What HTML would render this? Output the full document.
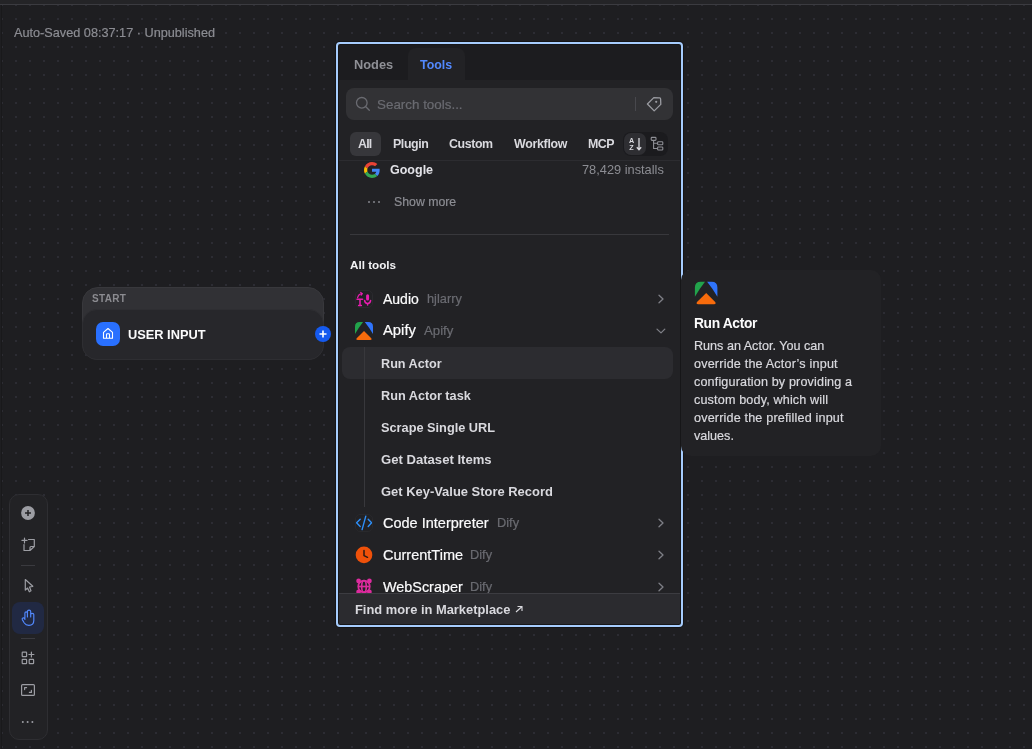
<!DOCTYPE html>
<html><head><meta charset="utf-8">
<style>
*{box-sizing:border-box;margin:0;padding:0}
html,body{width:1032px;height:749px;overflow:hidden;background:#1e1e21;font-family:"Liberation Sans", sans-serif;}
body{position:relative;background-color:#1e1e21;
background-image:radial-gradient(circle at 1px 1px,#2c2c33 0.9px,transparent 1.3px);
background-size:14px 14px;background-position:1px 4px;}
.a{position:absolute}
.t{position:absolute;white-space:nowrap;line-height:1;will-change:transform}
svg.a{overflow:visible}
</style></head>
<body>
<div class="a" style="left:0px;top:0px;width:1032px;height:4px;background:#242427;"></div>
<div class="a" style="left:0px;top:4px;width:1032px;height:1px;background:#3b3b40;"></div>
<div class="a" style="left:1px;top:5px;width:1px;height:744px;background:#19191b;"></div>
<div class="t" style="left:14px;top:26.700000000000003px;font-size:12.7px;font-weight:400;color:#8c8d93;;-webkit-text-stroke:0.2px #8c8d93">Auto-Saved 08:37:17 · Unpublished</div>
<div class="a" style="left:82px;top:287px;width:242px;height:73px;background:#313135;border-radius:16px;border:1px solid #38383c"></div>
<div class="a" style="left:82px;top:309px;width:242px;height:51px;background:#27272b;border-radius:15px;border:1px solid #2e2e32"></div>
<div class="t" style="left:92px;top:294.3px;font-size:10px;font-weight:700;color:#8b8b90;letter-spacing:0.3px">START</div>
<div class="a" style="left:96px;top:322px;width:24px;height:24px;background:#2970ff;border-radius:7px"></div>
<svg class="a" style="left:0;top:0" width="1032" height="749"><path d="M103.5,338.2 L103.5,332.3 L108,328.5 L112.5,332.3 L112.5,338.2 Z M106.5,338.2 L106.5,334.5 Q106.5,333.7 107.3,333.7 L108.7,333.7 Q109.5,333.7 109.5,334.5 L109.5,338.2" fill="none" stroke="#fff" stroke-width="1.1" stroke-linejoin="round"/></svg>
<div class="t" style="left:128.2px;top:328.8px;font-size:12.8px;font-weight:700;color:#fbfbfc;">USER INPUT</div>
<div class="a" style="left:315px;top:326px;width:16px;height:16px;background:#155aef;border-radius:8px"></div>
<svg class="a" style="left:0;top:0" width="1032" height="749"><path d="M319.5,334 H326.5 M323,330.5 V337.5" stroke="#fff" stroke-width="1.6"/></svg>
<div class="a" style="left:9px;top:494px;width:39px;height:246px;background:#222225;border-radius:10px;border:1px solid #2e2e32"></div>
<div class="a" style="left:12px;top:602px;width:32px;height:32px;background:#212943;border-radius:8px"></div>
<div class="a" style="left:21px;top:565px;width:14px;height:1px;background:#3a3a3f;"></div>
<div class="a" style="left:21px;top:638px;width:14px;height:1px;background:#3a3a3f;"></div>
<svg class="a" style="left:0;top:0" width="1032" height="749" fill="none" stroke="#9c9da3" stroke-width="1.2" stroke-linecap="round" stroke-linejoin="round">
<circle cx="28" cy="513" r="6.9" fill="#9c9da3" stroke="none"/>
<path d="M25,513 H31 M28,510 V516" stroke="#222225" stroke-width="1.5" stroke-linecap="butt"/>
<path d="M28.5,539.5 L34.3,539.5 L34.3,546.5 L30,550.5 L24,550.5 L24,544.5 M34.3,546.5 L31,546.5 Q30,546.5 30,547.5 L30,550.5 M22,540.4 L27,540.4 M24.5,538 L24.5,543"/>
<path d="M25.3,579.5 L32.8,586.3 L29.5,587 L31,590.8 L29.3,591.8 L27.6,588 L25.3,590 Z"/>
<path d="M24.9,618.2 V613.2 Q24.9,611.8 26.15,611.8 Q27.4,611.8 27.4,613.2 V617 M27.4,617 V611.4 Q27.4,610.1 29.05,610.1 Q30.7,610.1 30.7,611.4 V617 M30.7,617 V614.6 Q30.7,613.3 32.25,613.3 Q33.8,613.3 33.8,614.6 V620.5 Q33.8,625.3 28.9,625.3 Q25.8,625.3 24.3,623 L22.3,619.6 Q21.8,618.5 22.8,618 Q23.9,617.5 24.9,618.8 V619.5" stroke="#5289ff" stroke-width="1.15"/>
<rect x="22.2" y="652.2" width="4.4" height="4.4" rx="0.6"/>
<rect x="22.2" y="659.3" width="4.4" height="4.4" rx="0.6"/>
<rect x="29.2" y="659.3" width="4.4" height="4.4" rx="0.6"/>
<path d="M31.4,652 V657 M28.9,654.5 H33.9"/>
<rect x="21.6" y="684.6" width="12.8" height="10.8" rx="1"/>
<path d="M24.6,689.6 V687.6 H26.6 M31.4,690.4 V692.4 H29.4"/>
<circle cx="22.8" cy="722.1" r="1" fill="#9c9da3" stroke="none"/>
<circle cx="27.6" cy="722.1" r="1" fill="#9c9da3" stroke="none"/>
<circle cx="32.4" cy="722.1" r="1" fill="#9c9da3" stroke="none"/>
</svg>
<div class="a" style="left:336px;top:42px;width:347px;height:585px;border-radius:4px;box-shadow:0 0 0 1px #141416"></div>
<div class="a" style="left:338px;top:44px;width:343px;height:581px;background:#222225;"></div>
<div class="a" style="left:338px;top:44px;width:343px;height:36px;background:#1c1c1f;"></div>
<div class="a" style="left:408px;top:48px;width:57px;height:32px;background:#222225;border-radius:8px 8px 0 0"></div>
<div class="t" style="left:353.8px;top:58.5px;font-size:12.8px;font-weight:700;color:#8f9096;">Nodes</div>
<div class="t" style="left:420.3px;top:58.5px;font-size:12.4px;font-weight:700;color:#5289ff;">Tools</div>
<div class="a" style="left:346px;top:88px;width:327px;height:32px;background:#323235;border-radius:8px"></div>
<svg class="a" style="left:0;top:0" width="1032" height="749" fill="none" stroke="#6a6b71" stroke-width="1.3" stroke-linecap="round"><circle cx="361.8" cy="102.8" r="5.3"/><path d="M365.8,106.8 L369.3,110.3"/></svg>
<div class="t" style="left:377.3px;top:97.8px;font-size:13.4px;font-weight:400;color:#6a6b71;;-webkit-text-stroke:0.2px #6a6b71">Search tools...</div>
<div class="a" style="left:635px;top:97px;width:1px;height:14px;background:#48484d;"></div>
<svg class="a" style="left:0;top:0" width="1032" height="749" fill="none" stroke="#9a9ba1" stroke-width="1.3" stroke-linejoin="round"><path d="M647.4,104 L653.8,97.6 L659.6,97.9 Q660.6,98 660.6,99 L660.8,104.4 L654.2,110.9 Z"/><circle cx="656.2" cy="101.8" r="1.1" fill="#9a9ba1" stroke="none"/></svg>
<div class="a" style="left:350px;top:132px;width:31px;height:24px;background:#37373b;border-radius:6px"></div>
<div class="t" style="left:358.3px;top:138.1px;font-size:12.4px;font-weight:700;color:#d9d9de;letter-spacing:-0.8px">All</div>
<div class="t" style="left:392.9px;top:138.1px;font-size:12.4px;font-weight:700;color:#d9d9de;letter-spacing:-0.4px">Plugin</div>
<div class="t" style="left:449px;top:138.1px;font-size:12.4px;font-weight:700;color:#d9d9de;letter-spacing:-0.4px">Custom</div>
<div class="t" style="left:513.8px;top:138.1px;font-size:12.4px;font-weight:700;color:#d9d9de;letter-spacing:-0.3px">Workflow</div>
<div class="t" style="left:587.5px;top:138.1px;font-size:12.4px;font-weight:700;color:#d9d9de;letter-spacing:-0.45px">MCP</div>
<div class="a" style="left:623px;top:132px;width:45px;height:24px;background:#1b1b1e;border-radius:8px"></div>
<div class="a" style="left:624px;top:133px;width:22px;height:22px;background:#2e2e32;border-radius:7px"></div>
<svg class="a" style="left:0;top:0" width="1032" height="749">
<text x="629" y="143.4" font-family="Liberation Sans" font-weight="bold" font-size="7.2" fill="#d9d9de">A</text>
<text x="629.2" y="150.2" font-family="Liberation Sans" font-weight="bold" font-size="7.2" fill="#d9d9de">Z</text>
<path d="M639,138 V149.5 M636.8,147.3 L639,149.7 L641.2,147.3" fill="none" stroke="#d9d9de" stroke-width="1.3"/>
<g fill="none" stroke="#8f9096" stroke-width="1.1">
<rect x="651.2" y="137.4" width="4.8" height="3" rx="0.8"/>
<rect x="657.6" y="141.8" width="5.2" height="3" rx="0.8"/>
<rect x="657.6" y="147" width="5.2" height="3" rx="0.8"/>
<path d="M653.6,140.4 V148.5 H657.6 M653.6,143.3 H657.6"/>
</g></svg>
<div class="a" style="left:338px;top:160px;width:343px;height:1px;background:#2c2c30;"></div>
<div class="a" style="left:338px;top:161px;width:343px;height:432px;overflow:hidden">
<svg class="a" style="left:-338px;top:-161px" width="1032" height="749"><g transform="translate(364,162) scale(0.3333)">
<path fill="#EA4335" d="M24 9.5c3.54 0 6.71 1.22 9.21 3.6l6.85-6.850C35.9 2.38 30.47 0 24 0 14.62 0 6.51 5.38 2.56 13.22l7.98 6.19C12.43 13.72 17.74 9.5 24 9.5z"/>
<path fill="#4285F4" d="M46.98 24.55c0-1.57-.15-3.09-.38-4.55H24v9.02h12.94c-.58 2.960-2.26 5.48-4.78 7.18l7.73 6c4.51-4.18 7.09-10.36 7.09-17.65z"/>
<path fill="#FBBC05" d="M10.53 28.59c-.48-1.45-.76-2.99-.76-4.59s.27-3.14.76-4.59l-7.98-6.19C.92 16.46 0 20.12 0 24c0 3.88.92 7.54 2.56 10.78l7.97-6.19z"/>
<path fill="#34A853" d="M24 48c6.48 0 11.930-2.13 15.89-5.81l-7.73-6c-2.15 1.45-4.92 2.3-8.16 2.3-6.26 0-11.57-4.22-13.47-9.910l-7.98 6.19C6.51 42.62 14.62 48 24 48z"/>
</g></svg>
<div class="t" style="left:52.39999999999998px;top:2.5999999999999943px;font-size:12.5px;font-weight:700;color:#e3e3e8;">Google</div>
<div class="t" style="right:17px;top:2.6999999999999886px;font-size:12.8px;color:#8c8d93">78,429 installs</div>
<svg class="a" style="left:-338px;top:-161px" width="1032" height="749"><g fill="#6a6b71"><rect x="368" y="201" width="2" height="2"/><rect x="373" y="201" width="2" height="2"/><rect x="378" y="201" width="2" height="2"/></g></svg>
<div class="t" style="left:55.80000000000001px;top:34.80000000000001px;font-size:12.3px;font-weight:400;color:#8c8d93;;-webkit-text-stroke:0.2px #8c8d93">Show more</div>
<div class="a" style="left:12px;top:73px;width:319px;height:1px;background:#38383c;"></div>
<div class="t" style="left:12px;top:97.69999999999999px;font-size:11.7px;font-weight:700;color:#f2f2f4;">All tools</div>
<div class="a" style="left:17px;top:129px;width:18px;height:18px;background:transparent;border:1px solid #2a2a2e;border-radius:5px"></div>
<svg class="a" style="left:-338px;top:-161px" width="1032" height="749"><g fill="none" stroke="#e81cb0" stroke-width="1.5" stroke-linecap="round">
<path d="M357,299.2 H362.6 M360,299.2 V305.5 M358.6,305.6 H361.4"/>
<path d="M357.6,297.6 Q358.5,294 362,293.6 M360.7,292.4 L362.3,293.6 L361.2,295.2" stroke-width="1.2"/>
<path d="M364.6,300.4 Q364.8,303.4 367.6,303.4 Q370.4,303.4 370.6,300.4 M367.6,303.4 V305"/>
</g>
<rect x="366.1" y="294.2" width="3" height="6.3" rx="1.5" fill="#e81cb0"/></svg>
<div class="t" style="left:44.5px;top:130.89999999999998px;font-size:14px;font-weight:400;color:#fbfbfc;;-webkit-text-stroke:0.2px #fbfbfc">Audio</div>
<div class="t" style="left:88.80000000000001px;top:131.89999999999998px;font-size:12.8px;font-weight:400;color:#6a6b71;;-webkit-text-stroke:0.2px #6a6b71">hjlarry</div>
<svg class="a" style="left:-338px;top:-161px" width="1032" height="749"><path d="M659,295.2 L663,299 L659,302.8" fill="none" stroke="#7e7f86" stroke-width="1.3" stroke-linecap="round" stroke-linejoin="round"/></svg>
<svg class="a" style="left:-338px;top:-161px" width="1032" height="749"><g transform="translate(355,322) scale(0.8)">
<path fill="#22a34b" d="M0,14.9 L0,5.8 Q0,0 5.8,0 L10.1,0 Q5,6.5 0,14.9 Z"/>
<path fill="#2f74fb" d="M12.2,0 L16.7,0 Q22.5,0 22.5,5.8 L22.5,14.9 Q17.5,6.5 12.2,0 Z"/>
<path fill="#f76b0c" d="M11.3,11.3 L20.3,20.3 Q21.6,22.4 19.2,22.4 L3.2,22.4 Q0.8,22.4 2.1,20.3 Z"/>
</g></svg>
<div class="t" style="left:44.5px;top:161.89999999999998px;font-size:14.8px;font-weight:400;color:#fbfbfc;;-webkit-text-stroke:0.2px #fbfbfc">Apify</div>
<div class="t" style="left:85.60000000000002px;top:163.10000000000002px;font-size:13.2px;font-weight:400;color:#6a6b71;;-webkit-text-stroke:0.2px #6a6b71">Apify</div>
<svg class="a" style="left:-338px;top:-161px" width="1032" height="749"><path d="M657,329.1 L661,332.9 L664.8,329.1" fill="none" stroke="#7e7f86" stroke-width="1.3" stroke-linecap="round" stroke-linejoin="round"/></svg>
<div class="a" style="left:4px;top:186px;width:331px;height:32px;background:#2c2c30;border-radius:8px"></div>
<div class="a" style="left:26px;top:186px;width:1px;height:160px;background:#38383c;"></div>
<div class="t" style="left:42.80000000000001px;top:196.89999999999998px;font-size:12.65px;font-weight:700;color:#d9d9de;">Run Actor</div>
<div class="t" style="left:42.80000000000001px;top:228.89999999999998px;font-size:12.7px;font-weight:700;color:#d9d9de;">Run Actor task</div>
<div class="t" style="left:42.80000000000001px;top:260.9px;font-size:12.75px;font-weight:700;color:#d9d9de;">Scrape Single URL</div>
<div class="t" style="left:42.80000000000001px;top:291.9px;font-size:13.1px;font-weight:700;color:#d9d9de;">Get Dataset Items</div>
<div class="t" style="left:42.80000000000001px;top:324.9px;font-size:12.95px;font-weight:700;color:#d9d9de;">Get Key-Value Store Record</div>
<svg class="a" style="left:-338px;top:-161px" width="1032" height="749"><g fill="none" stroke="#2e90fa" stroke-width="1.4" stroke-linecap="round" stroke-linejoin="round"><path d="M360.2,519.3 L356.6,522.8 L360.2,526.4 M368.2,519.3 L371.6,522.8 L368.2,526.4 M365.8,516.1 L362.1,529.6"/></g></svg>
<div class="a" style="left:17px;top:353px;width:18px;height:18px;background:transparent;border:1px solid #29292c;border-radius:5px"></div>
<div class="t" style="left:44.5px;top:354.9px;font-size:14.5px;font-weight:400;color:#fbfbfc;;-webkit-text-stroke:0.2px #fbfbfc">Code Interpreter</div>
<div class="t" style="left:159px;top:355.9px;font-size:12.8px;font-weight:400;color:#6a6b71;;-webkit-text-stroke:0.2px #6a6b71">Dify</div>
<svg class="a" style="left:-338px;top:-161px" width="1032" height="749"><path d="M659,519.2 L663,523 L659,526.8" fill="none" stroke="#7e7f86" stroke-width="1.3" stroke-linecap="round" stroke-linejoin="round"/></svg>
<svg class="a" style="left:-338px;top:-161px" width="1032" height="749"><circle cx="364" cy="554.9" r="8.3" fill="#ef510a"/><path d="M364,550.6 V555.6 L367.5,557.3" fill="none" stroke="#2a1a14" stroke-width="1.5" stroke-linecap="round" stroke-linejoin="round"/></svg>
<div class="t" style="left:44.5px;top:386.9px;font-size:14.5px;font-weight:400;color:#fbfbfc;;-webkit-text-stroke:0.2px #fbfbfc">CurrentTime</div>
<div class="t" style="left:132.39999999999998px;top:387.9px;font-size:12.8px;font-weight:400;color:#6a6b71;;-webkit-text-stroke:0.2px #6a6b71">Dify</div>
<svg class="a" style="left:-338px;top:-161px" width="1032" height="749"><path d="M659,551.2 L663,555 L659,558.8" fill="none" stroke="#7e7f86" stroke-width="1.3" stroke-linecap="round" stroke-linejoin="round"/></svg>
<svg class="a" style="left:-338px;top:-161px" width="1032" height="749"><g fill="none" stroke="#dd2b9e" stroke-width="1.7"><circle cx="364" cy="586.5" r="5.8"/><ellipse cx="364" cy="586.5" rx="2.3" ry="5.8"/><path d="M358.2,586.5 H369.8"/></g>
<g fill="#dd2b9e"><circle cx="358.6" cy="581" r="2.4"/><circle cx="369.4" cy="581" r="2.4"/><circle cx="358.6" cy="592" r="2.4"/><circle cx="369.4" cy="592" r="2.4"/></g></svg>
<div class="t" style="left:44.5px;top:418.9px;font-size:14.4px;font-weight:400;color:#fbfbfc;;-webkit-text-stroke:0.2px #fbfbfc">WebScraper</div>
<div class="t" style="left:132.10000000000002px;top:419.9px;font-size:12.8px;font-weight:400;color:#6a6b71;;-webkit-text-stroke:0.2px #6a6b71">Dify</div>
<svg class="a" style="left:-338px;top:-161px" width="1032" height="749"><path d="M659,583.2 L663,587 L659,590.8" fill="none" stroke="#7e7f86" stroke-width="1.3" stroke-linecap="round" stroke-linejoin="round"/></svg>
</div>
<div class="a" style="left:338px;top:593px;width:343px;height:32px;background:#2b2b2f;border-top:1px solid #3c3c41"></div>
<div class="t" style="left:355.4px;top:604.2px;font-size:12.9px;font-weight:700;color:#d9d9de;">Find more in Marketplace</div>
<svg class="a" style="left:0;top:0" width="1032" height="749"><path d="M516,612 L522,606.5 M517.5,606.5 H522 V611" fill="none" stroke="#d9d9de" stroke-width="1.1"/></svg>
<div class="a" style="left:336px;top:42px;width:347px;height:585px;border:2px solid #a6ccfd;border-radius:4px;box-shadow:inset 0 0 0 1px #161618"></div>
<div class="a" style="left:681px;top:270px;width:200px;height:186px;background:#222225;border-radius:10px"></div>
<svg class="a" style="left:0;top:0" width="1032" height="749"><g transform="translate(694.9,281.8) scale(1)">
<path fill="#22a34b" d="M0,14.9 L0,5.8 Q0,0 5.8,0 L10.1,0 Q5,6.5 0,14.9 Z"/>
<path fill="#2f74fb" d="M12.2,0 L16.7,0 Q22.5,0 22.5,5.8 L22.5,14.9 Q17.5,6.5 12.2,0 Z"/>
<path fill="#f76b0c" d="M11.3,11.3 L20.3,20.3 Q21.6,22.4 19.2,22.4 L3.2,22.4 Q0.8,22.4 2.1,20.3 Z"/>
</g></svg>
<div class="t" style="left:693.6px;top:316.8px;font-size:13.8px;font-weight:700;color:#fbfbfc;letter-spacing:-0.35px">Run Actor</div>
<div class="t" style="left:693.6px;top:340px;font-size:12.6px;font-weight:400;color:#d9d9de;letter-spacing:0px;-webkit-text-stroke:0.2px #d9d9de">Runs an Actor. You can</div>
<div class="t" style="left:693.6px;top:358px;font-size:12.6px;font-weight:400;color:#d9d9de;letter-spacing:0.19px;-webkit-text-stroke:0.2px #d9d9de">override the Actor’s input</div>
<div class="t" style="left:693.6px;top:376px;font-size:12.6px;font-weight:400;color:#d9d9de;letter-spacing:0.15px;-webkit-text-stroke:0.2px #d9d9de">configuration by providing a</div>
<div class="t" style="left:693.6px;top:394px;font-size:12.6px;font-weight:400;color:#d9d9de;letter-spacing:0.155px;-webkit-text-stroke:0.2px #d9d9de">custom body, which will</div>
<div class="t" style="left:693.6px;top:412px;font-size:12.6px;font-weight:400;color:#d9d9de;letter-spacing:0.17px;-webkit-text-stroke:0.2px #d9d9de">override the prefilled input</div>
<div class="t" style="left:693.6px;top:430px;font-size:12.6px;font-weight:400;color:#d9d9de;letter-spacing:0px;-webkit-text-stroke:0.2px #d9d9de">values.</div>
</body></html>
